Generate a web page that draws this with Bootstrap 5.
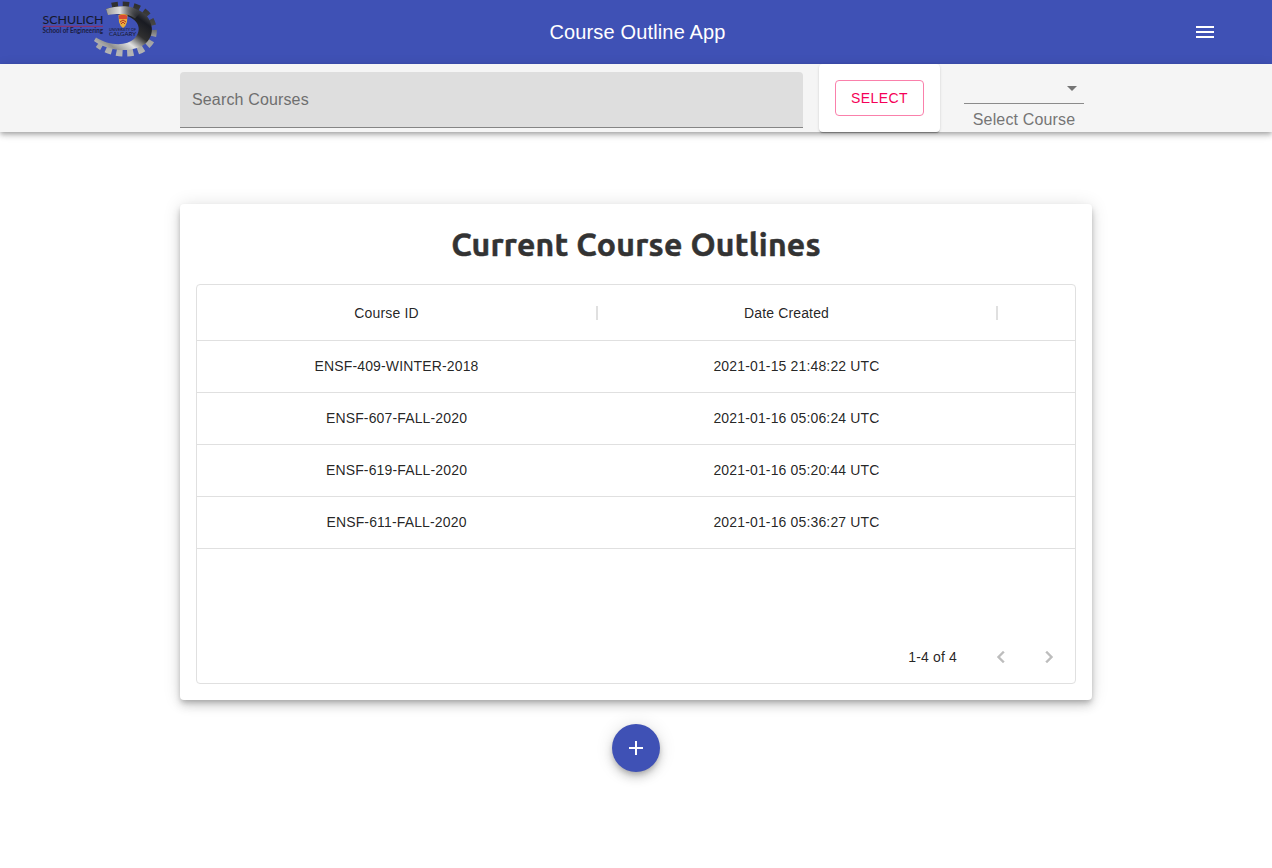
<!DOCTYPE html>
<html lang="en">
<head>
<meta charset="utf-8">
<meta name="viewport" content="width=device-width, initial-scale=1">
<title>Course Outline App</title>
<link href="https://cdn.jsdelivr.net/npm/bootstrap@5.3.0/dist/css/bootstrap.min.css" rel="stylesheet">
<style>
body{font-family:"Liberation Sans",Arial,sans-serif;font-size:14px;line-height:20px;letter-spacing:.15px;color:rgba(0,0,0,.87);background:#fff}
.topbar{height:64px;background:#3f51b5;padding:0 43px 0 42px}
.topbar h1{font-size:20px;font-weight:400;line-height:32px;letter-spacing:.15px;padding-left:4px}
.side{width:116px;flex:none}
.side svg{display:block}
.menu-btn{width:48px;height:48px}
.raised{box-shadow:0 2px 4px -1px rgba(0,0,0,.2),0 4px 5px 0 rgba(0,0,0,.14),0 1px 10px 0 rgba(0,0,0,.12)}
.floating{box-shadow:0 3px 5px -1px rgba(0,0,0,.2),0 6px 10px 0 rgba(0,0,0,.14),0 1px 18px 0 rgba(0,0,0,.12)}
.wrap{width:912px}
.tools{height:68px;background:#f5f5f5}
.search{width:623px;height:56px;background:#dedede;border:0;border-bottom:1px solid #858585;border-radius:4px 4px 0 0;padding:0 12px;font-size:16px;letter-spacing:.15px;color:#6f6f6f;outline:0}
.search::placeholder{color:#6f6f6f;opacity:1}
.paper{background:#fff;border-radius:4px}
.pick{width:121px;height:68px;margin-left:16px}
.pick .btn{width:89px;height:36px;padding:0;font-size:14px;letter-spacing:.4px;line-height:24px;--bs-btn-color:#f50057;--bs-btn-border-color:#fa80ab;--bs-btn-border-radius:4px}
.pick{box-shadow:0 2px 1px -1px rgba(0,0,0,.2),0 1px 1px 0 rgba(0,0,0,.14),0 1px 3px 0 rgba(0,0,0,.12)}
.chooser{width:120px;margin-left:24px}
.chooser-box{height:32px;margin-top:8px;border-bottom:1px solid #8b8b8b}
.chooser-label{font-size:16px;line-height:24px;color:#757575;padding-top:4px}
.panel{height:496px;margin-top:72px;padding:16px}
.panel h2{font-family:Ubuntu,"Noto Sans",sans-serif;font-weight:700;font-size:32px;line-height:40px;letter-spacing:.235px;-webkit-text-stroke:.5px #333;color:#333;margin:4px 0 20px}
.grid-box{height:400px;border:1px solid #e0e0e0;border-radius:4px}
.grid-row{height:52px;border-bottom:1px solid #e0e0e0;padding-bottom:2px}
.grid-head{height:56px;padding-bottom:0}
.cell{width:400px;flex:none;padding-right:1px}
.grid-head .cell{padding-left:11px;padding-right:0}
.sep{width:2px;height:14px;background:#e0e0e0;margin-right:-1px}
.cell .ttl{width:357px;margin-right:auto}
.pager{height:52px;padding-right:2px}
.pager .arrow{width:48px;height:48px;padding-bottom:1px}
.fab{width:48px;height:48px;background:#3f51b5;margin-top:24px}
</style>
</head>
<body>
<header class="topbar d-flex align-items-center justify-content-between text-white">
  <div class="side align-self-start">
    <svg width="118" height="60" viewBox="42 0 118 60" aria-label="Schulich School of Engineering">
      <defs>
        <linearGradient id="metal" x1="0" y1="1" x2="1" y2="0">
          <stop offset="0" stop-color="#d8d8d8"/><stop offset=".2" stop-color="#909090"/><stop offset=".38" stop-color="#e2e2e2"/><stop offset=".56" stop-color="#303030"/><stop offset=".75" stop-color="#191b22"/><stop offset="1" stop-color="#777"/>
        </linearGradient>
        <linearGradient id="teeth" x1="0" y1="0" x2="0" y2="1">
          <stop offset="0" stop-color="#303030"/><stop offset=".4" stop-color="#454545"/><stop offset=".65" stop-color="#999"/><stop offset="1" stop-color="#b4b4b4"/>
        </linearGradient>
        <linearGradient id="topfade" x1="0" y1="0" x2="1" y2="0">
          <stop offset="0" stop-color="#999"/><stop offset=".4" stop-color="#ddd"/><stop offset="1" stop-color="#555" stop-opacity="0"/>
        </linearGradient>
      </defs>
      <path d="M112 6.500C123 4 137 5 146 14C156 25 155 39 146 46C134 56 113 55 98 44" fill="none" stroke="url(#teeth)" stroke-width="7.500" stroke-dasharray="6.200 4.600"/>
      <path d="M106 9C121 4 136 6 146 15C155 26 153 37 145 44C132 53 110 52 94 41L96 37.500C109 45.500 126 47 135 38C144 28 137 14 113 14C111 14 109 14 108 15Z" fill="url(#metal)"/>
      <path d="M106 9C119 5 132 5 141 12L135 18.500C129 14 121 13 108 15Z" fill="url(#topfade)"/>
      <path d="M118.500 15Q123 13 127.500 15L127 22Q126 26 123 28Q120 26 119 22Z" fill="#e9ad3c"/>
      <path d="M119 15.500Q123 14 127 15.500V19H119Z" fill="#d84b32"/>
      <path d="M120 22L123 20L126 22M121 24L123 22L125 24" fill="none" stroke="#b52d29"/>
      <text x="42.500" y="24" font-family="Lato" font-size="12" textLength="61" lengthAdjust="spacingAndGlyphs" letter-spacing="0" fill="#17182c" stroke="#17182c" stroke-width=".1">SCHULICH</text>
      <path d="M43 26.300H103" stroke="#a52951" stroke-width=".9"/>
      <text x="42.500" y="32.800" font-family="Lato" font-weight="700" font-size="6.500" textLength="60.500" lengthAdjust="spacingAndGlyphs" letter-spacing="0" fill="#1b1d42">School of Engineering</text>
      <text x="109" y="30.700" font-family="Lato" font-size="3.800" textLength="27" lengthAdjust="spacingAndGlyphs" letter-spacing="0" fill="#17182c">UNIVERSITY OF</text>
      <text x="109" y="35.600" font-family="Lato" font-size="6" textLength="27" lengthAdjust="spacingAndGlyphs" letter-spacing="0" fill="#17182c">CALGARY</text>
    </svg>
  </div>
  <h1 class="m-0 text-center">Course Outline App</h1>
  <div class="side d-flex justify-content-end">
    <button class="menu-btn btn border-0 p-0 text-white" aria-label="Menu"><svg width="24" height="24" viewBox="0 0 24 24" fill="currentColor" class="mx-auto"><path d="M3 18h18v-2H3v2zm0-5h18v-2H3v2zm0-7v2h18V6H3z"/></svg></button>
  </div>
</header>
<section class="tools raised">
  <div class="wrap mx-auto d-flex">
    <input class="search mt-2" placeholder="Search Courses" aria-label="Search Courses">
    <div class="paper pick d-flex align-items-center justify-content-center"><button class="btn btn-outline-danger">SELECT</button></div>
    <div class="chooser text-center">
      <div class="chooser-box d-flex align-items-center justify-content-end"><svg width="24" height="24" viewBox="0 0 24 24" fill="#757575"><path d="M7 10l5 5 5-5z"/></svg></div>
      <div class="chooser-label">Select Course</div>
    </div>
  </div>
</section>
<main class="wrap mx-auto pb-5">
  <section class="paper panel floating">
    <h2 class="text-center">Current Course Outlines</h2>
    <div class="grid-box d-flex flex-column">
      <div class="grid-row grid-head d-flex align-items-center">
        <div class="cell d-flex align-items-center"><span class="ttl text-center">Course ID</span><span class="sep"></span></div>
        <div class="cell d-flex align-items-center"><span class="ttl text-center">Date Created</span><span class="sep"></span></div>
      </div>
      <div class="grid-row d-flex align-items-center text-center"><div class="cell">ENSF-409-WINTER-2018</div><div class="cell">2021-01-15 21:48:22 UTC</div></div>
      <div class="grid-row d-flex align-items-center text-center"><div class="cell">ENSF-607-FALL-2020</div><div class="cell">2021-01-16 05:06:24 UTC</div></div>
      <div class="grid-row d-flex align-items-center text-center"><div class="cell">ENSF-619-FALL-2020</div><div class="cell">2021-01-16 05:20:44 UTC</div></div>
      <div class="grid-row d-flex align-items-center text-center"><div class="cell">ENSF-611-FALL-2020</div><div class="cell">2021-01-16 05:36:27 UTC</div></div>
      <div class="pager mt-auto d-flex align-items-center justify-content-end">
        <span class="me-3 pe-1">1-4 of 4</span>
        <span class="arrow d-flex align-items-center justify-content-center"><svg width="24" height="24" viewBox="0 0 24 24" fill="#bdbdbd" stroke="#bdbdbd" stroke-width=".4"><path d="M15.410 7.410L14 6l-6 6 6 6 1.410-1.410L10.830 12z"/></svg></span>
        <span class="arrow d-flex align-items-center justify-content-center"><svg width="24" height="24" viewBox="0 0 24 24" fill="#bdbdbd" stroke="#bdbdbd" stroke-width=".4"><path d="M10 6L8.590 7.410 13.170 12l-4.580 4.590L10 18l6-6z"/></svg></span>
      </div>
    </div>
  </section>
  <button class="fab floating btn rounded-circle border-0 p-0 d-flex align-items-center justify-content-center mx-auto" aria-label="Add"><svg width="24" height="24" viewBox="0 0 24 24" fill="#fff"><path d="M19 13h-6v6h-2v-6H5v-2h6V5h2v6h6v2z"/></svg></button>
</main>
</body>
</html>
